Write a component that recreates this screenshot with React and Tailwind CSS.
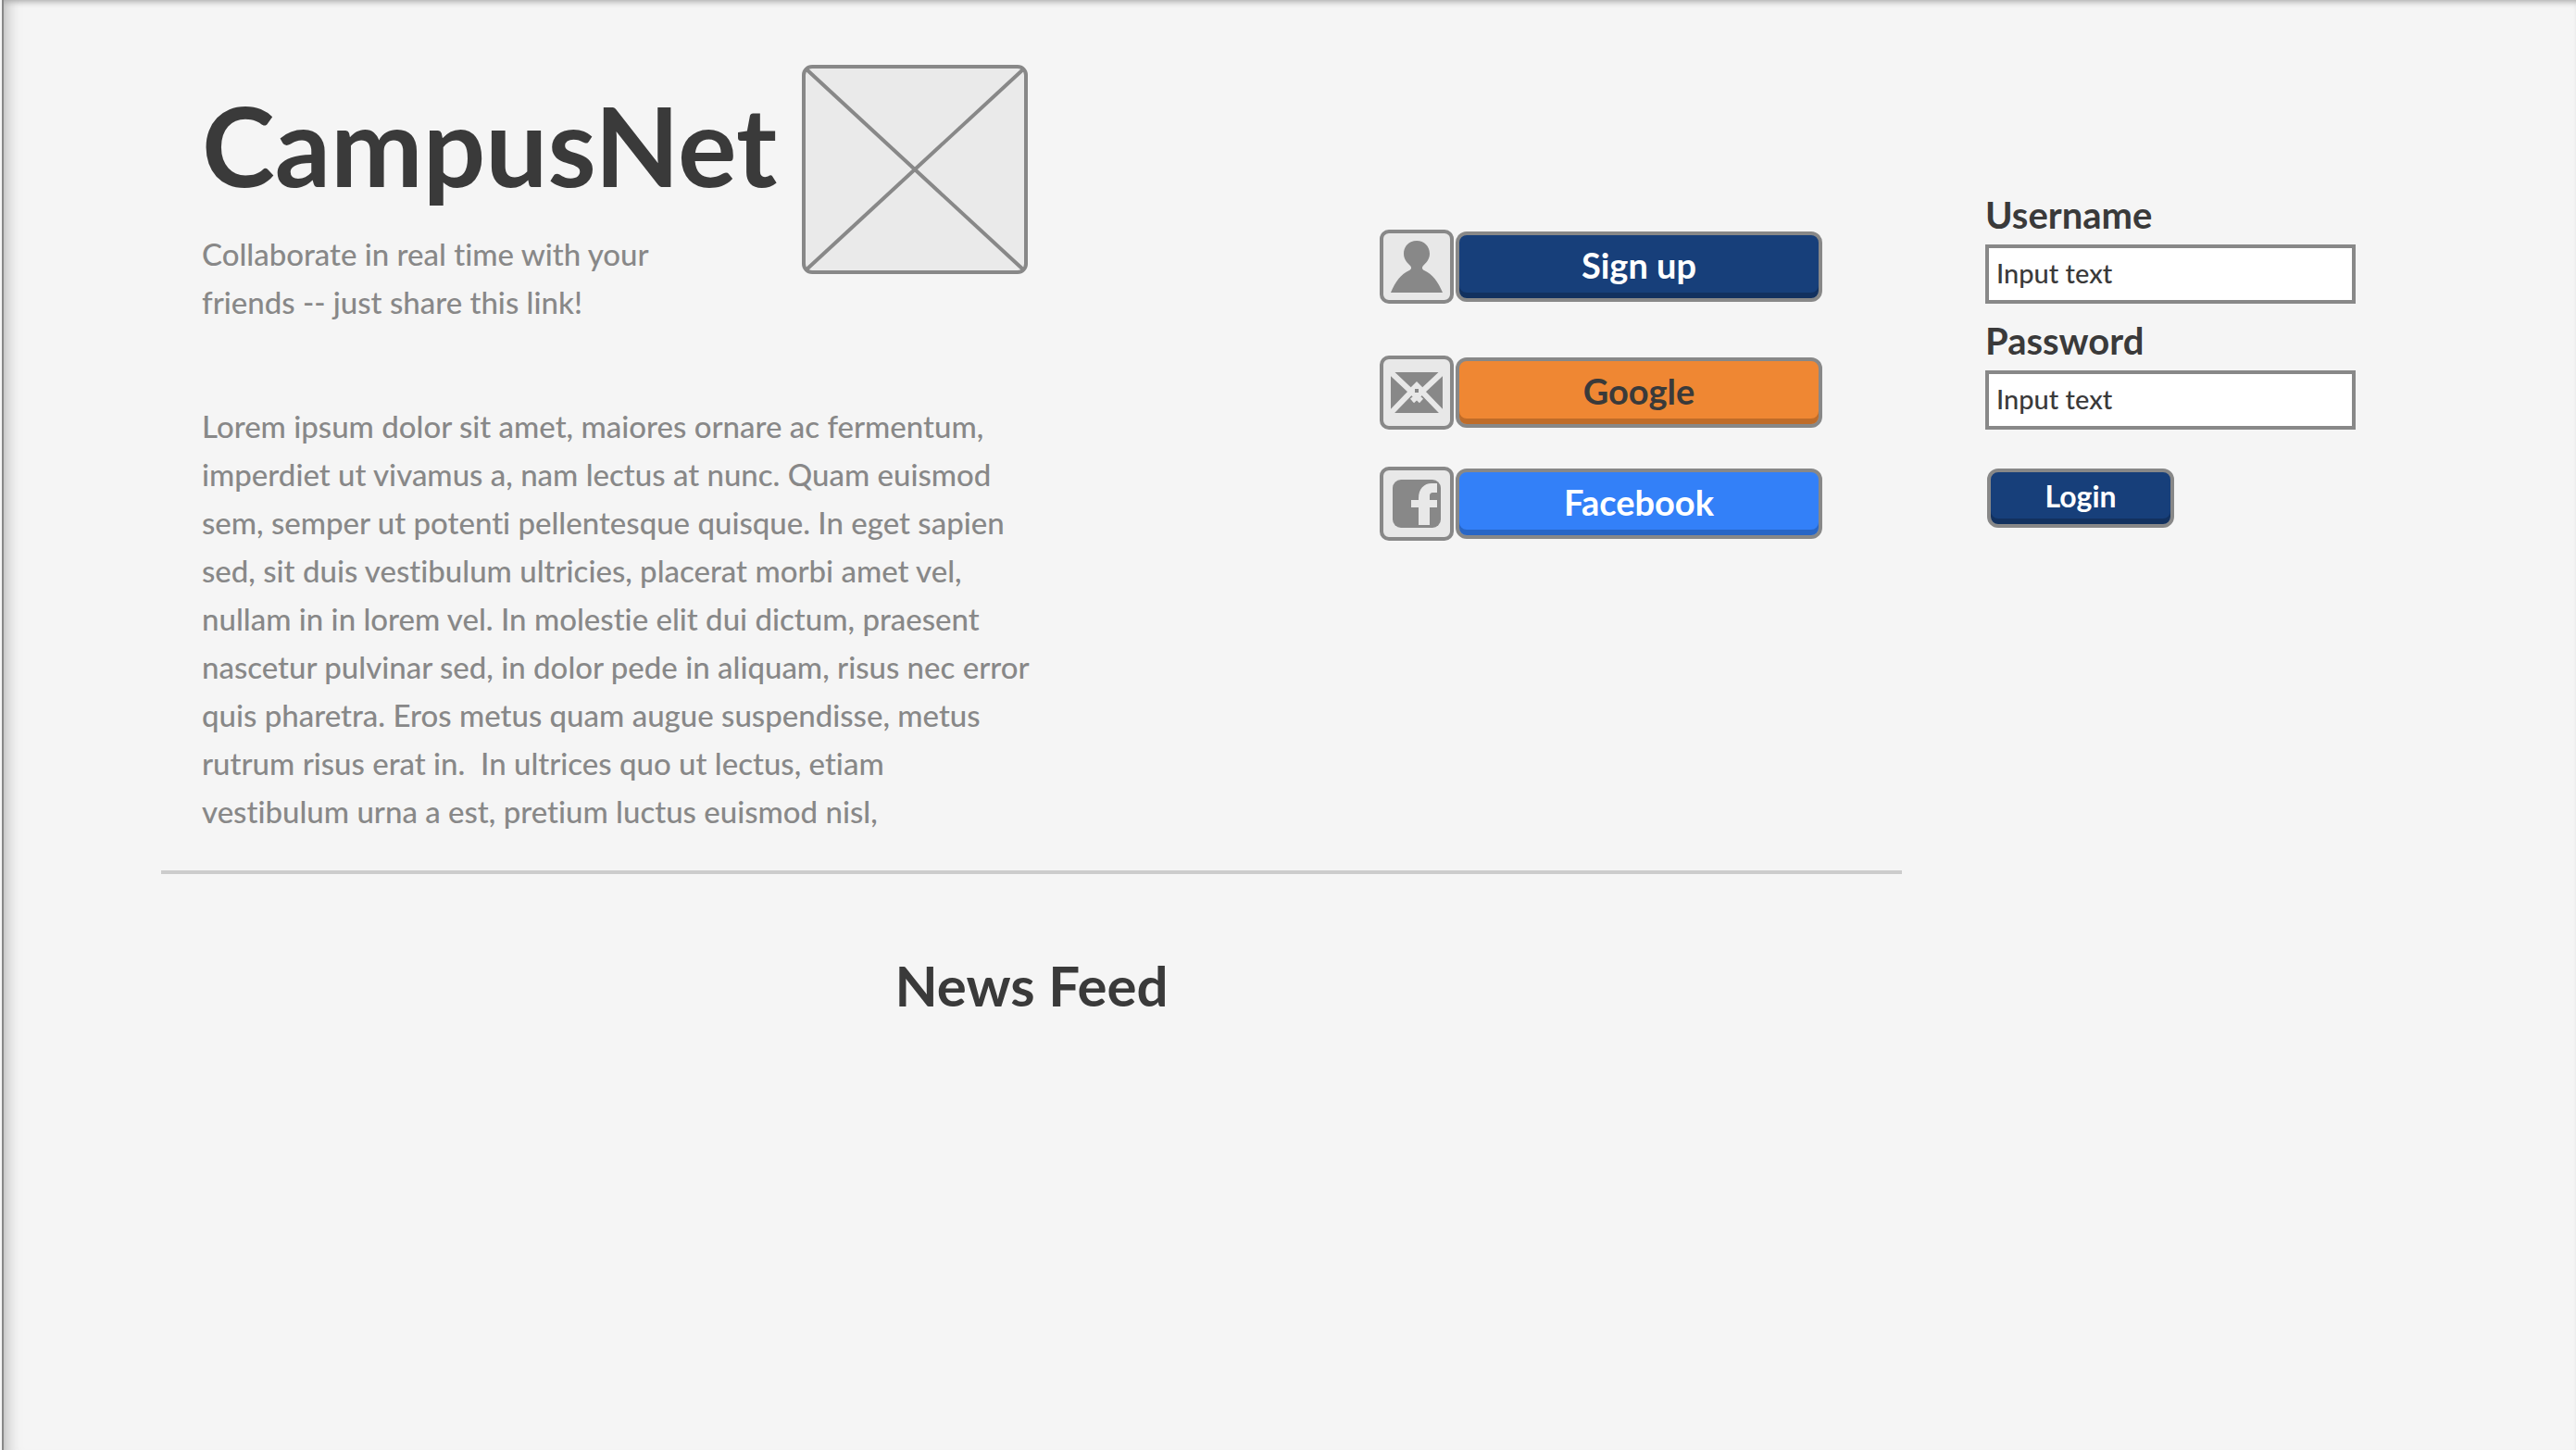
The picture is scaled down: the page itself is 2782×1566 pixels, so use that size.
const BODY_LINES = [
  'Lorem ipsum dolor sit amet, maiores ornare ac fermentum,',
  'imperdiet ut vivamus a, nam lectus at nunc. Quam euismod',
  'sem, semper ut potenti pellentesque quisque. In eget sapien',
  'sed, sit duis vestibulum ultricies, placerat morbi amet vel,',
  'nullam in in lorem vel. In molestie elit dui dictum, praesent',
  'nascetur pulvinar sed, in dolor pede in aliquam, risus nec error',
  'quis pharetra. Eros metus quam augue suspendisse, metus',
  'rutrum risus erat in.\u00a0 In ultrices quo ut lectus, etiam',
  'vestibulum urna a est, pretium luctus euismod nisl,',
];

function PersonIcon() {
  return (
    <svg viewBox="0 0 80 80" className="size-full" aria-hidden="true">
      <path
        fill="#888"
        d="M40 12c8 0 14 6 14 14c0 6-4 10-7 13c-1.500 1.500-1.500 3.500 1 5c9 4 15 12 20 24H12c5-12 11-20 20-24c2.500-1.500 2.500-3.500 1-5c-3-3-7-7-7-13c0-8 6-14 14-14z"
      />
    </svg>
  );
}

function MailIcon() {
  return (
    <svg viewBox="0 0 80 80" className="size-full" aria-hidden="true">
      <rect x="12" y="18" width="56" height="44" fill="#888" />
      <path d="M12 18l33 31M68 18L35 49M12 62l28-29 28 29" fill="none" stroke="#e8e8e8" strokeWidth="6" />
      <path d="M30 38l10-10 10 10-10 10z" fill="#e8e8e8" />
      <rect x="38" y="36" width="4" height="4" fill="#888" />
    </svg>
  );
}

function FacebookIcon() {
  return (
    <svg viewBox="0 0 80 80" className="size-full" aria-hidden="true">
      <rect x="14" y="14" width="52" height="52" rx="9" fill="#888" />
      <path fill="#e8e8e8" d="M42 63V44h-8v-8h8v-2c0-10 6-16 14-16h6v10h-4c-3 0-4 1-4 4v4h8v8h-8v19z" />
    </svg>
  );
}

const PROVIDERS = [
  { label: 'Sign up', Icon: PersonIcon, tone: 'bg-[#173f7a] text-white shadow-[inset_0_-6px_0_#12315f]', row: 'mb-14' },
  { label: 'Google', Icon: MailIcon, tone: 'bg-[#ef8733] text-[#3a3a3a] shadow-[inset_0_-6px_0_#bf6c29]', row: 'mb-10' },
  { label: 'Facebook', Icon: FacebookIcon, tone: 'bg-[#3380f8] text-white shadow-[inset_0_-6px_0_#2866c6]', row: '' },
];

function Field({ id, label, type }) {
  return (
    <div className="mb-2">
      <label htmlFor={id} className="block text-[40px] leading-[64px] font-bold">
        {label}
      </label>
      <input
        id={id}
        type={type}
        defaultValue="Input text"
        className="block h-16 w-full border-4 border-[#888] bg-white px-2 pb-1 text-[29px] font-medium outline-none"
      />
    </div>
  );
}

export default function App() {
  return (
    <div className="min-h-screen bg-[#f5f5f5] pl-[2px] font-['Lato',sans-serif] text-[#3a3a3a] [font-variant-ligatures:none]">
      <main className="min-h-screen border-l-2 border-[#888] shadow-[inset_0_6px_6px_-4px_#aaa,inset_20px_0_16px_-16px_#bbb]">
        <section className="grid grid-cols-[minmax(0,1272fr)_minmax(0,654fr)_minmax(0,400fr)] pr-[238px] pl-[214px]">
          <div className="max-w-[892px] pt-[70px]">
            <header className="flex items-start justify-between">
              <div>
                <h1 className="pt-4 text-[119px] leading-[140px] font-bold whitespace-nowrap">CampusNet</h1>
                <p className="pt-[22px] text-[33px] leading-[52px] font-medium text-[#888]">
                  Collaborate in real time with your
                  <br />
                  friends -- just share this link!
                </p>
              </div>
              <svg viewBox="0 0 244 226" className="h-[226px] w-[244px] shrink-0" role="img" aria-label="Logo placeholder">
                <rect x="2" y="2" width="240" height="222" rx="9" fill="#eaeaea" stroke="#888" strokeWidth="4" />
                <path d="M4 4L240 222M240 4L4 222" stroke="#888" strokeWidth="4" />
              </svg>
            </header>
            <p className="pt-[82px] text-[33px] leading-[52px] font-medium whitespace-nowrap text-[#888]">
              {BODY_LINES.map((line) => (
                <span key={line} className="block">
                  {line}
                </span>
              ))}
            </p>
          </div>

          <div className="pt-[248px] pr-44">
            {PROVIDERS.map(({ label, Icon, tone, row }) => (
              <div key={label} className={`flex items-center gap-[2px] ${row}`}>
                <div className="size-20 shrink-0 rounded-[10px] bg-[#e8e8e8] outline-4 -outline-offset-4 outline-[#888]">
                  <Icon />
                </div>
                <button type="button" className={`h-[76px] flex-1 rounded-xl border-4 border-[#888] pb-1 text-[38px] font-bold ${tone}`}>
                  {label}
                </button>
              </div>
            ))}
          </div>

          <form className="pt-[200px]" onSubmit={(e) => e.preventDefault()}>
            <Field id="username" label="Username" type="text" />
            <Field id="password" label="Password" type="text" />
            <button
              type="submit"
              className="mt-[34px] ml-[2px] h-16 w-[202px] rounded-xl border-4 border-[#888] bg-[#173f7a] pb-1 text-[32px] font-bold text-white shadow-[inset_0_-6px_0_#12315f]"
            >
              Login
            </button>
          </form>
        </section>

        <section className="mt-[38px] mr-[728px] ml-[170px] border-t-4 border-[#ccc] pt-[82px]">
          <h2 className="text-center text-[60px] leading-[76px] font-bold">News Feed</h2>
        </section>
      </main>
    </div>
  );
}
